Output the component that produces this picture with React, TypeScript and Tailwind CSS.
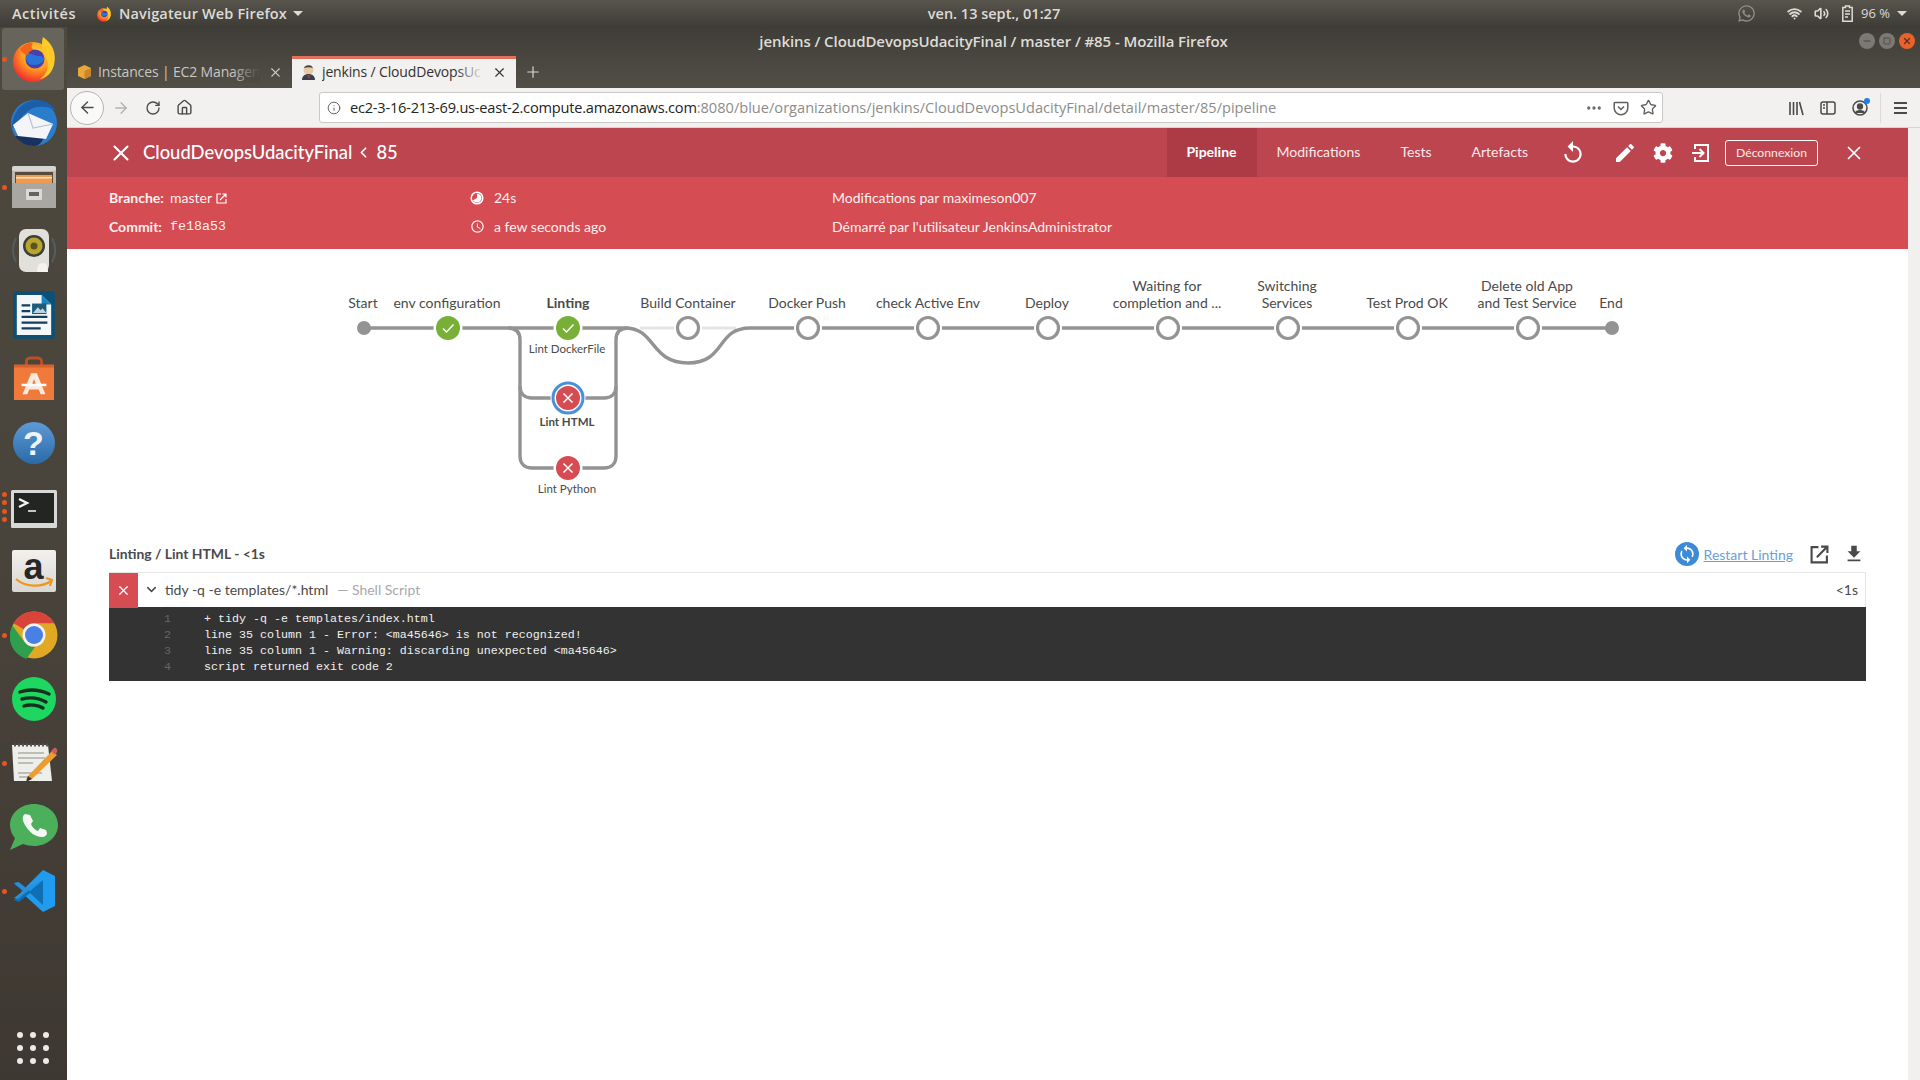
import React from "react";
import { ArrowLeft, ArrowRight, RotateCw, Home, Info, Ellipsis, Star, Plus, X, Minus, Square, ChevronDown, ChevronLeft, Volume2, Wifi } from "lucide-react";
import { MdReplay, MdEdit, MdSync, MdFileDownload, MdAccessTime } from "react-icons/md";
import { FaCog, FaWhatsapp } from "react-icons/fa";

const UI = "font-['Open_Sans','Noto_Sans',sans-serif]";

function FirefoxIcon({ size = 48 }: { size?: number }) {
  return (
    <svg width={size} height={size} viewBox="0 0 48 48">
      <defs>
        <radialGradient id={`ffa${size}`} cx="0.6" cy="0.3" r="0.85">
          <stop offset="0" stopColor="#ffd43a" />
          <stop offset="0.45" stopColor="#ff9a1f" />
          <stop offset="0.8" stopColor="#f3392c" />
          <stop offset="1" stopColor="#e3134f" />
        </radialGradient>
      </defs>
      <circle cx="23" cy="27" r="20" fill={`url(#ffa${size})`} />
      <path d="M33 2c9 6 14 16 11 28-2 8-8 13-14 14 7-5 9-12 7-19-1-5-5-9-5-14 0-3 0-6 1-9z" fill="#ffc928" />
      <circle cx="25" cy="24" r="9.5" fill="#4b3fa8" />
      <path d="M16 19c5-2 8 2 13 2 4 0 5 2 5 4-3 5-10 6-15 4-3-3-4-7-3-10z" fill="#2a73d8" />
      <path d="M10 14c4-5 9-7 13-6-2 3-2 5 1 7-4 0-5 2-6 5-3 0-6-2-8-6z" fill="#f4621f" />
    </svg>
  );
}

function Thunderbird() {
  return (
    <svg width="50" height="50" viewBox="0 0 50 50">
      <circle cx="25" cy="25" r="23" fill="#2a7ccd" />
      <path d="M3 30C3 14 14 2 28 2c8 0 15 4 19 11-8-5-20-6-28 0-7 5-10 12-16 17z" fill="#1d5ea8" />
      <path d="M25 48c-8 0-15-4-19-10h30c-3 6-6 10-11 10z" fill="#17325f" />
      <path d="M4 27L19 15l25 11-7 15L9 38z" fill="#f3f5f8" />
      <path d="M19 15l5 15 20-4" fill="none" stroke="#b9c2cf" strokeWidth="1.2" />
    </svg>
  );
}

function Files() {
  return (
    <svg width="46" height="46" viewBox="0 0 46 46">
      <rect x="1" y="2" width="44" height="42" rx="3" fill="#b9b7b2" />
      <rect x="1" y="2" width="44" height="5" rx="2" fill="#d7d5d1" />
      <rect x="4" y="8" width="38" height="11" fill="#5a4a3a" />
      <rect x="5" y="11" width="36" height="8" fill="#ee9a52" />
      <rect x="5" y="13" width="36" height="1.5" fill="#fbe3c7" />
      <rect x="1" y="19" width="44" height="25" fill="#a9a7a2" />
      <rect x="15" y="25" width="16" height="11" rx="1" fill="#dcdad6" />
      <rect x="18" y="28" width="10" height="4" fill="#66645f" />
    </svg>
  );
}

function Speaker() {
  return (
    <svg width="50" height="46" viewBox="0 0 50 46">
      <path d="M7 10a26 26 0 0 0 0 24M43 10a26 26 0 0 1 0 24" fill="none" stroke="#5c6a74" strokeWidth="2" opacity="0.6" />
      <rect x="10" y="1" width="30" height="43" rx="7" fill="#e2e0da" />
      <circle cx="25" cy="18" r="11" fill="#3e3d38" />
      <circle cx="25" cy="18" r="8.5" fill="#b8a52c" />
      <circle cx="25" cy="18" r="3.5" fill="#5b5420" />
      <path d="M28 44c0-6 2-9 6-9s5 4 5 9z" fill="#f4f3ef" />
    </svg>
  );
}

function Writer() {
  return (
    <svg width="42" height="50" viewBox="0 0 44 50">
      <rect x="0" y="0" width="44" height="50" rx="3" fill="#0e4f76" />
      <path d="M4 4h26l10 10v32H4z" fill="#f4f6f8" />
      <path d="M30 4l10 10H30z" fill="#1c82c0" />
      <path d="M9 15h9M9 21h9M9 27h27M9 33h27M9 39h20" stroke="#123f5f" strokeWidth="2.4" />
      <rect x="20" y="13" width="15" height="11" fill="#1d5a7c" />
      <path d="M21 23l5-6 3 3 2-2 4 5z" fill="#bdd4df" />
    </svg>
  );
}

function Store() {
  return (
    <svg className="-mt-[2px]" width="42" height="46" viewBox="0 0 44 48">
      <path d="M14 13V7a4 4 0 0 1 4-4h8a4 4 0 0 1 4 4v6" fill="none" stroke="#bd4f24" strokeWidth="3" />
      <path d="M1 10h42v37H1z" fill="#ef7a3c" />
      <path d="M1 10h42v3H1z" fill="#d9602a" />
      <path d="M19 19h6l9 22h-5l-2-5H17l-2 5h-5z" fill="#fbe9dd" />
      <path d="M19.5 32h5L22 25z" fill="#ef7a3c" />
      <rect x="9" y="30" width="26" height="2.6" fill="#fff" />
    </svg>
  );
}

function Help() {
  return (
    <div className="w-[42px] h-[42px] rounded-full bg-linear-to-b from-[#5c9bd6] to-[#2a6aa6] flex items-center justify-center text-[#f1f4f7] text-[34px] font-bold font-['Liberation_Sans',sans-serif] leading-none">
      ?
    </div>
  );
}

function Terminal() {
  return (
    <svg className="mt-[3px]" width="46" height="38" viewBox="0 0 46 38">
      <rect x="0" y="0" width="46" height="38" rx="1.5" fill="#d8d8d6" />
      <rect x="3" y="3" width="40" height="30" fill="#232523" />
      <path d="M8 9l8 4-8 4" fill="none" stroke="#f2f2f2" strokeWidth="2.4" />
      <path d="M17 21h8" stroke="#eeeeee" strokeWidth="1.6" />
    </svg>
  );
}

function Amazon() {
  return (
    <div className="relative w-[44px] h-[42px] bg-linear-to-b from-[#f2f1ee] to-[#d8d7d3] rounded-[2px] flex justify-center">
      <span className="text-[36px] leading-[34px] font-bold text-[#272725] font-['Liberation_Sans',sans-serif]">a</span>
      <svg className="absolute left-0 bottom-[2px]" width="44" height="14" viewBox="0 0 44 14">
        <path d="M4 3c9 8 25 9 35 2M34 2l6 2-2 6" fill="none" stroke="#f0961c" strokeWidth="2.2" />
      </svg>
    </div>
  );
}

function Chrome() {
  return (
    <svg width="48" height="48" viewBox="0 0 48 48">
      <circle cx="24" cy="24" r="23.5" fill="#e0a823" />
      <path d="M24 .5A23.5 23.5 0 0 1 44.4 12.3H24a11.8 11.8 0 0 0-10.2 5.9L3.6 12.3A23.5 23.5 0 0 1 24 .5z" fill="#d8443a" />
      <path d="M3.6 12.3l10.2 17.6A11.8 11.8 0 0 0 24 35.8L13.8 47A23.5 23.5 0 0 1 3.6 12.3z" fill="#2f9e4f" transform="rotate(-6 24 24)" />
      <circle cx="24" cy="24" r="11.5" fill="#f2f2f2" />
      <circle cx="24" cy="24" r="9" fill="#4a7fe6" />
    </svg>
  );
}

function Spotify() {
  return (
    <svg width="44" height="44" viewBox="0 0 44 44">
      <circle cx="22" cy="22" r="22" fill="#1ed760" />
      <path d="M8 15c9-3 20-2 29 2M10 22c8-2 17-1 24 3M12 29c6-2 14-1 19 2" fill="none" stroke="#16301e" strokeWidth="3.4" strokeLinecap="round" />
    </svg>
  );
}

function Gedit() {
  return (
    <svg className="-mt-[3px]" width="48" height="44" viewBox="0 0 48 44">
      <path d="M2 5h36l4 36H4z" fill="#eeeeea" />
      <path d="M4 5h34" stroke="#55534e" strokeWidth="3" strokeDasharray="2 2" />
      <path d="M8 13h26M8 18h27M8 23h15M8 33h24M9 37h14" stroke="#8e8d88" strokeWidth="1.2" />
      <path d="M18 36l24-25 5 4-25 24-6 1z" fill="#ee9c2f" />
      <path d="M41 11l3-3c2-1 4 2 3 4l-2 3z" fill="#c9605c" />
      <path d="M16 42l2-6 4 3z" fill="#3a3025" />
    </svg>
  );
}

function WhatsApp() {
  return (
    <svg width="50" height="48" viewBox="0 0 50 48">
      <path d="M25 1C12 1 1 10 1 22c0 5 2 10 5 13L1 47l13-6c3 1 7 2 11 2 13 0 24-9 24-21S38 1 25 1z" fill="#4caf5c" />
      <path d="M16 11c-3 2-3 6 0 11 4 7 10 12 17 12 3 0 5-2 5-4l-1-3-6-2-2 3c-3-1-6-4-7-7l2-3-3-6z" fill="#f6f7f4" />
    </svg>
  );
}

function VSCode() {
  return (
    <svg width="44" height="44" viewBox="0 0 44 44">
      <path d="M31 1l12 6v30l-12 6-22-20z" fill="#1f9cf0" />
      <path d="M31 1v10L18 22 7 13l-5 2 9 7-9 9 5 2 11-9 13 12v-1z" fill="#0e6fb5" />
      <path d="M31 11L12 25 6 30l-4-1 9-7-9-8 4-1 8 6z" fill="#2a8fd8" />
    </svg>
  );
}

function Dock({ dots = 0, active = false, dotsMany = false, children }: { dots?: number; active?: boolean; dotsMany?: boolean; children: React.ReactNode }) {
  return (
    <div className="relative h-[64px] w-[67px] flex items-center justify-center">
      {active && <div className="absolute left-[2px] top-[1px] bottom-[1px] w-[62px] rounded-[3px] bg-[#67645c]" />}
      {dots > 0 && (
        <div className={`absolute left-[2px] top-0 bottom-0 flex flex-col justify-center ${dotsMany ? "gap-[3.5px]" : ""}`}>
          {Array.from({ length: dots }).map((_, i) => (
            <span key={i} className="block w-[5px] h-[5px] rounded-full bg-[#e95420]" />
          ))}
        </div>
      )}
      <div className="relative flex items-center justify-center">{children}</div>
    </div>
  );
}

function Sidebar() {
  return (
    <aside className="w-[67px] shrink-0 flex flex-col bg-linear-to-b from-[#4d493f] via-[#49443b] to-[#3e3832]">
      <Dock active dots={1}><FirefoxIcon /></Dock>
      <Dock><Thunderbird /></Dock>
      <Dock dots={1}><Files /></Dock>
      <Dock><Speaker /></Dock>
      <Dock><Writer /></Dock>
      <Dock><Store /></Dock>
      <Dock><Help /></Dock>
      <Dock dots={4} dotsMany><Terminal /></Dock>
      <Dock><Amazon /></Dock>
      <Dock dots={1}><Chrome /></Dock>
      <Dock><Spotify /></Dock>
      <Dock dots={1}><Gedit /></Dock>
      <Dock><WhatsApp /></Dock>
      <Dock dots={1}><VSCode /></Dock>
      <div className="mt-auto h-[64px] flex items-center justify-center pr-[1px]">
        <div className="grid grid-cols-3 gap-x-[7px] gap-y-[7px]">
          {Array.from({ length: 9 }).map((_, i) => (
            <span key={i} className="block w-[6px] h-[6px] rounded-full bg-[#ecebe8]" />
          ))}
        </div>
      </div>
    </aside>
  );
}

function TopBar() {
  return (
    <header className={`relative h-[27px] shrink-0 flex items-center bg-linear-to-b from-[#58554d] to-[#3e3c36] text-[#dddbd6] text-[14.5px] font-semibold ${UI}`}>
      <span className="ml-[12px] w-[64px] whitespace-nowrap tracking-[0.5px]">Activités</span>
      <span className="ml-[20px]"><FirefoxIcon size={16} /></span>
      <span className="ml-[7px] tracking-[0.15px]">Navigateur Web Firefox</span>
      <span className="ml-[6px] border-x-[5px] border-x-transparent border-t-[5px] border-t-[#dddbd6]" />
      <span className="absolute left-[920px] top-[3px] w-[148px] text-center text-[14.5px] whitespace-nowrap">ven. 13 sept., 01:27</span>
      <div className="ml-auto flex items-center pr-[13px]">
        <FaWhatsapp size={19} className="text-[#8e8c86]" />
        <Wifi size={15} strokeWidth={3} className="ml-[31px]" />
        <Volume2 size={15} strokeWidth={2.6} className="ml-[12px]" />
        <svg className="ml-[12px]" width="14" height="17" viewBox="0 0 14 17" fill="none" stroke="#dddbd6" strokeWidth="1.5">
          <path d="M4.5 1h4v1.5h2.7v13.7H1.8V2.5h2.7z" />
          <path d="M4 6h5M4 9h5M4 12h3" />
        </svg>
        <span className="ml-[6px] text-[13px] font-normal">96 %</span>
        <span className="ml-[7px] border-x-[5px] border-x-transparent border-t-[5px] border-t-[#dddbd6]" />
      </div>
    </header>
  );
}

function WinBtn({ cls, children }: { cls: string; children: React.ReactNode }) {
  return <span className={`w-[16px] h-[16px] rounded-full flex items-center justify-center ${cls}`}>{children}</span>;
}

function Tab({ active, text, icon }: { active?: boolean; text: string; icon: React.ReactNode }) {
  return (
    <div className={`relative h-[32px] flex items-center ${active ? "w-[224px] bg-[#f2f1ef] border-t-[3px] border-[#e0705a] text-[#33322e] pb-[3px]" : "w-[224px] text-[#c9c7c1]"}`}>
      <span className="shrink-0 ml-[9px]">{icon}</span>
      <div className="relative ml-[6px] w-[162px] overflow-hidden whitespace-nowrap text-[14px] tracking-[-0.15px] leading-[22px]">
        {text}
        <span className={`absolute right-0 top-0 bottom-0 w-[28px] bg-linear-to-r from-transparent ${active ? "to-[#f2f1ef]" : "to-[#4b4941]"}`} />
      </div>
      <X size={15} strokeWidth={1.8} className="ml-[8px] shrink-0" />
    </div>
  );
}

function AmazonBox() {
  return (
    <svg width="15" height="16" viewBox="0 0 15 16">
      <path d="M1 4l6.5-3L14 4v8l-6.5 3L1 12z" fill="#e8a93a" />
      <path d="M7.5 7v8L14 12V4z" fill="#c9852a" />
    </svg>
  );
}

function JenkinsFav() {
  return (
    <svg width="15" height="17" viewBox="0 0 15 17">
      <circle cx="7.5" cy="6" r="5" fill="#e8c9a8" />
      <path d="M3 4c1-3 7-4 9 0-3-1-6-1-9 0z" fill="#47403a" />
      <path d="M1 16c0-4 3-6 6.5-6S14 12 14 16z" fill="#3a4250" />
      <path d="M6 11h3l-1 4z" fill="#c0392b" />
    </svg>
  );
}

function TitleAndTabs() {
  return (
    <div className={`relative h-[61px] shrink-0 bg-linear-to-b from-[#3f3d37] to-[#524f47] flex flex-col ${UI}`}>
      <div className="relative h-[29px] flex items-center justify-center text-[15px] font-semibold text-[#dedcd7] tracking-[-0.08px]">
        <span className="-mt-[1px]">jenkins / CloudDevopsUdacityFinal / master / #85 - Mozilla Firefox</span>
        <div className="absolute right-[5px] top-[6px] flex gap-[4px]">
          <WinBtn cls="bg-[#7b7972]"><Minus size={10} className="text-[#3f3d37]" /></WinBtn>
          <WinBtn cls="bg-[#7b7972]"><Square size={8} className="text-[#3f3d37]" /></WinBtn>
          <WinBtn cls="bg-[#e9622c]"><X size={10} strokeWidth={3} className="text-[#59301c]" /></WinBtn>
        </div>
      </div>
      <div className="flex items-end pl-[1px]">
        <Tab text="Instances | EC2 Managem" icon={<AmazonBox />} />
        <Tab active text="jenkins / CloudDevopsUc" icon={<JenkinsFav />} />
        <Plus size={18} strokeWidth={1.6} className="ml-[8px] mb-[7px] text-[#d9d7d2]" />
      </div>
    </div>
  );
}

function NavBar() {
  return (
    <div className={`h-[40px] shrink-0 bg-[#f2f1ef] border-b border-[#d7d5d2] flex items-center text-[#4a4a48] ${UI}`}>
      <div className="ml-[3px] w-[34px] h-[34px] rounded-full border border-[#b5b4b0] bg-[#f9f9f8] flex items-center justify-center">
        <ArrowLeft size={19} strokeWidth={1.8} />
      </div>
      <ArrowRight size={18} strokeWidth={1.8} className="ml-[8px] text-[#b3b2ae]" />
      <RotateCw size={16} strokeWidth={2} className="ml-[15px]" />
      <Home size={17} strokeWidth={2} className="ml-[15px]" />
      <div className="ml-[126px] w-[1344px] h-[31px] bg-white rounded-[3px] border border-[#c9c8c4] flex items-center">
        <Info size={14} strokeWidth={1.6} className="ml-[7px] text-[#5b5b59]" />
        <span className="ml-[9px] w-[925px] whitespace-nowrap text-[14.6px] tracking-[-0.22px] text-[#242422]">
          ec2-3-16-213-69.us-east-2.compute.amazonaws.com<span className="tracking-[0px] text-[#8c8c88]">:8080/blue/organizations/jenkins/CloudDevopsUdacityFinal/detail/master/85/pipeline</span>
        </span>
        <Ellipsis size={18} strokeWidth={2.4} className="ml-auto text-[#6a6a68]" />
        <svg className="ml-[10px]" width="16" height="16" viewBox="0 0 16 16" fill="none" stroke="#5f5f5d" strokeWidth="1.5">
          <path d="M2 2.5h12a.8.8 0 0 1 .8.8V8a6.8 6.8 0 0 1-13.6 0V3.3a.8.8 0 0 1 .8-.8z" />
          <path d="M5 6.5l3 3 3-3" />
        </svg>
        <Star size={17} strokeWidth={1.9} className="ml-[11px] mr-[5px] text-[#5f5f5d]" />
      </div>
      <svg className="ml-[125px]" width="16" height="16" viewBox="0 0 16 16" fill="none" stroke="#4a4a48" strokeWidth="1.6">
        <path d="M2 2v13M5.5 2v13M9 2v13M11.5 2l3.5 13" />
      </svg>
      <svg className="ml-[16px]" width="16" height="16" viewBox="0 0 16 16" fill="none" stroke="#4a4a48" strokeWidth="1.5">
        <rect x="1" y="2" width="14" height="12" rx="2" />
        <path d="M7 2v12M3 5h2M3 8h2" />
      </svg>
      <div className="relative ml-[16px] w-[16px] h-[16px]">
        <svg width="16" height="16" viewBox="0 0 16 16" fill="none" stroke="#4a4a48" strokeWidth="1.5">
          <circle cx="8" cy="8" r="7" />
          <circle cx="8" cy="6.5" r="2.4" fill="#4a4a48" />
          <path d="M3.5 13c1-3 8-3 9 0" fill="#4a4a48" />
        </svg>
        <span className="absolute -top-[2px] -right-[2px] w-[6px] h-[6px] rounded-full bg-[#1f7fe8]" />
      </div>
      <div className="ml-[12px] w-px h-[30px] bg-[#dcdbd8]" />
      <div className="ml-[13px] flex flex-col gap-[3px]">
        <span className="block w-[13px] h-[2px] bg-[#4a4a48]" />
        <span className="block w-[13px] h-[2px] bg-[#4a4a48]" />
        <span className="block w-[13px] h-[2px] bg-[#4a4a48]" />
      </div>
    </div>
  );
}

function JenkinsHeader() {
  return (
    <div className="h-[49px] shrink-0 bg-[#bd4550] flex items-center text-white">
      <X size={26} strokeWidth={1.9} className="ml-[41px]" />
      <span className="ml-[9px] text-[18.4px] font-medium">CloudDevopsUdacityFinal</span>
      <ChevronLeft size={17} strokeWidth={2.4} className="ml-[3px]" />
      <span className="ml-[4px] text-[18.4px] font-medium">85</span>
      <div className="ml-auto flex items-center h-full text-[14px]">
        <div className="w-[90px] h-full bg-[#ad3b45] flex items-center justify-center font-bold pb-[2px]">Pipeline</div>
        <span className="ml-[20px] pb-[2px] text-[#fbe9ea]">Modifications</span>
        <span className="ml-[40px] pb-[2px] text-[#fbe9ea]">Tests</span>
        <span className="ml-[40px] pb-[2px] text-[#fbe9ea]">Artefacts</span>
        <MdReplay size={26} className="ml-[32px]" />
        <MdEdit size={24} className="ml-[27px]" />
        <FaCog size={20} className="ml-[16px]" />
        <svg className="ml-[19px]" width="18" height="20" viewBox="0 0 18 20" fill="none" stroke="white" strokeWidth="2">
          <path d="M3 6V2h13v16H3v-4" />
          <path d="M0 10h11M7.5 6l4 4-4 4" />
        </svg>
        <button className="ml-[15px] w-[93px] h-[26px] border border-white rounded-[3px] text-[12.2px] leading-[24px] text-[#fbe9ea]">Déconnexion</button>
        <X size={22} strokeWidth={1.9} className="ml-[25px] mr-[43px]" />
      </div>
    </div>
  );
}

function RunInfo() {
  return (
    <div className="h-[72px] shrink-0 bg-[#d54c53] text-[#fdf0f0] text-[14px] grid grid-cols-[361px_375px_1fr] pl-[42px] pb-[2px] content-center gap-y-[9px] leading-[20px]">
      <div className="flex items-center">
        <span className="font-bold w-[61px]">Branche:</span>
        <span>master</span>
        <svg className="ml-[4px] mt-[2px]" width="11" height="11" viewBox="0 0 11 11" fill="none" stroke="white" strokeWidth="1.2">
          <path d="M5 1H1v9h9V6M4 7l6-6M6.5 1H10v3.5" />
        </svg>
      </div>
      <div className="flex items-center">
        <svg width="14" height="14" viewBox="0 0 14 14">
          <circle cx="7" cy="7" r="5.8" fill="none" stroke="white" strokeWidth="1.5" />
          <path d="M7 2.5A4.5 4.5 0 1 1 3 9.2L7 7z" fill="white" />
        </svg>
        <span className="ml-[10px]">24s</span>
      </div>
      <div className="-ml-[13px]">Modifications par maximeson007</div>
      <div className="flex items-center">
        <span className="font-bold w-[61px]">Commit:</span>
        <span className="font-['Liberation_Mono',monospace] text-[13.3px]">fe18a53</span>
      </div>
      <div className="flex items-center">
        <MdAccessTime size={15} />
        <span className="ml-[9px]">a few seconds ago</span>
      </div>
      <div className="-ml-[13px]">Démarré par l'utilisateur JenkinsAdministrator</div>
    </div>
  );
}

const LINE = "#949393";
const GREEN = "#78b037";
const RED = "#d54c53";

function Done({ x, y }: { x: number; y: number }) {
  return (
    <g>
      <circle cx={x} cy={y} r={14.5} fill="white" />
      <circle cx={x} cy={y} r={12} fill={GREEN} />
      <path d={`M${x - 5} ${y + 0.5}l3.5 3.5l7 -7.5`} fill="none" stroke="white" strokeWidth="1.5" />
    </g>
  );
}

function Failed({ x, y, selected }: { x: number; y: number; selected?: boolean }) {
  return (
    <g>
      <circle cx={x} cy={y} r={selected ? 17.5 : 14.5} fill="white" />
      {selected && <circle cx={x} cy={y} r={15} fill="none" stroke="#4a90d9" strokeWidth="3" />}
      <circle cx={x} cy={y} r={12} fill={RED} />
      <path d={`M${x - 4.5} ${y - 4.5}l9 9M${x + 4.5} ${y - 4.5}l-9 9`} fill="none" stroke="white" strokeWidth="1.5" />
    </g>
  );
}

function Hollow({ x }: { x: number }) {
  return (
    <g>
      <circle cx={x} cy={328} r={14} fill="white" />
      <circle cx={x} cy={328} r={10.5} fill="white" stroke={LINE} strokeWidth="3.2" />
    </g>
  );
}

function Label({ x, y, children, bold, small }: { x: number; y: number; children: React.ReactNode; bold?: boolean; small?: boolean }) {
  return (
    <text x={x} y={y} textAnchor="middle" fill="#4a4a4a" fontFamily="Lato, sans-serif" fontSize={small ? 11.5 : 14} fontWeight={bold ? 700 : 400}>
      {children}
    </text>
  );
}

function Pipeline() {
  return (
    <svg className="block shrink-0" width="1841" height="285" viewBox="67 249 1841 285">
      <path d="M640 328H736" stroke="#e4e4e4" strokeWidth="3.2" fill="none" />
      <g fill="none" stroke={LINE} strokeWidth="3.4">
        <path d="M364 328H625" />
        <path d="M625 328C656 328 650 363 688 363C726 363 716 328 750 328H1612" />
        <path d="M508 328C516 328 520 332 520 340V386C520 394 525 398 532 398H604C611 398 616 394 616 386V340C616 332 620 328 628 328" />
        <path d="M520 386V456C520 464 525 468 532 468H604C611 468 616 464 616 456V386" />
      </g>
      <circle cx="364" cy="328" r="7" fill={LINE} />
      <circle cx="1612" cy="328" r="7" fill={LINE} />
      <Done x={448} y={328} />
      <Done x={568} y={328} />
      <Failed x={568} y={398} selected />
      <Failed x={568} y={468} />
      {[688, 808, 928, 1048, 1168, 1288, 1408, 1528].map((x) => <Hollow key={x} x={x} />)}
      <Label x={363} y={308}>Start</Label>
      <Label x={447} y={308}>env configuration</Label>
      <Label x={568} y={308} bold>Linting</Label>
      <Label x={688} y={308}>Build Container</Label>
      <Label x={807} y={308}>Docker Push</Label>
      <Label x={928} y={308}>check Active Env</Label>
      <Label x={1047} y={308}>Deploy</Label>
      <Label x={1167} y={291}>Waiting for</Label>
      <Label x={1167} y={308}>completion and ...</Label>
      <Label x={1287} y={291}>Switching</Label>
      <Label x={1287} y={308}>Services</Label>
      <Label x={1407} y={308}>Test Prod OK</Label>
      <Label x={1527} y={291}>Delete old App</Label>
      <Label x={1527} y={308}>and Test Service</Label>
      <Label x={1611} y={308}>End</Label>
      <Label x={567} y={353} small>Lint DockerFile</Label>
      <Label x={567} y={426} small bold>Lint HTML</Label>
      <Label x={567} y={493} small>Lint Python</Label>
    </svg>
  );
}

function LogPanel() {
  const lines = [
    "+ tidy -q -e templates/index.html",
    "line 35 column 1 - Error: <ma45646> is not recognized!",
    "line 35 column 1 - Warning: discarding unexpected <ma45646>",
    "script returned exit code 2",
  ];
  return (
    <section className="pl-[42px] pr-[42px]">
      <div className="h-[38px] pt-[2px] flex items-center text-[#4a4a4a]">
        <span className="text-[13.9px] font-bold">Linting / Lint HTML - &lt;1s</span>
        <div className="ml-auto flex items-center">
          <span className="w-[24px] h-[24px] rounded-full bg-[#3b8bd6] flex items-center justify-center text-white"><MdSync size={20} /></span>
          <span className="ml-[5px] text-[14px] text-[#6a9fd8] underline">Restart Linting</span>
          <svg className="ml-[17px]" width="19" height="19" viewBox="0 0 18 18" fill="none" stroke="#4a4a4a" strokeWidth="2">
            <path d="M8 2H1.5v14.5H16V10M6.5 11.5L16 2M10.5 1.5h6v6" />
          </svg>
          <MdFileDownload size={22} className="ml-[14px] mr-[1px] text-[#4a4a4a]" />
        </div>
      </div>
      <div className="h-[35px] flex items-center border border-[#e6e6e6] border-b-0 text-[14px] text-[#4a4a4a]">
        <span className="-ml-px w-[29px] h-[35px] bg-[#d54c53] flex items-center justify-center"><X size={15} strokeWidth={2} className="text-white" /></span>
        <ChevronDown size={15} strokeWidth={2.4} className="ml-[6px] -mt-[2px]" />
        <span className="ml-[6px] -mt-[2px]">tidy -q -e templates/*.html</span>
        <span className="ml-[9px] -mt-[2px] text-[#a9a9a9]">— Shell Script</span>
        <span className="ml-auto mr-[7px] -mt-[2px]">&lt;1s</span>
      </div>
      <div className="h-[74px] bg-[#333333] pt-[4px] font-['Liberation_Mono',monospace] text-[11.66px] leading-[16px] text-[#f0f0f0]">
        {lines.map((l, i) => (
          <div key={i} className="flex h-[16px] whitespace-pre">
            <span className="w-[95px] pl-[55px] text-[#666666]">{i + 1}</span>
            <span>{l}</span>
          </div>
        ))}
      </div>
    </section>
  );
}

export default function App() {
  return (
    <div className="w-[1920px] h-[1080px] overflow-hidden flex flex-col font-['Lato',sans-serif]">
      <TopBar />
      <div className="flex-1 flex min-h-0">
        <Sidebar />
        <main className="flex-1 flex flex-col min-w-0">
          <TitleAndTabs />
          <NavBar />
          <div className="flex-1 flex min-h-0">
            <div className="flex-1 flex flex-col bg-white min-w-0">
              <JenkinsHeader />
              <RunInfo />
              <Pipeline />
              <LogPanel />
            </div>
            <div className="w-[12px] shrink-0 bg-[#f1f0ee]" />
          </div>
        </main>
      </div>
    </div>
  );
}
